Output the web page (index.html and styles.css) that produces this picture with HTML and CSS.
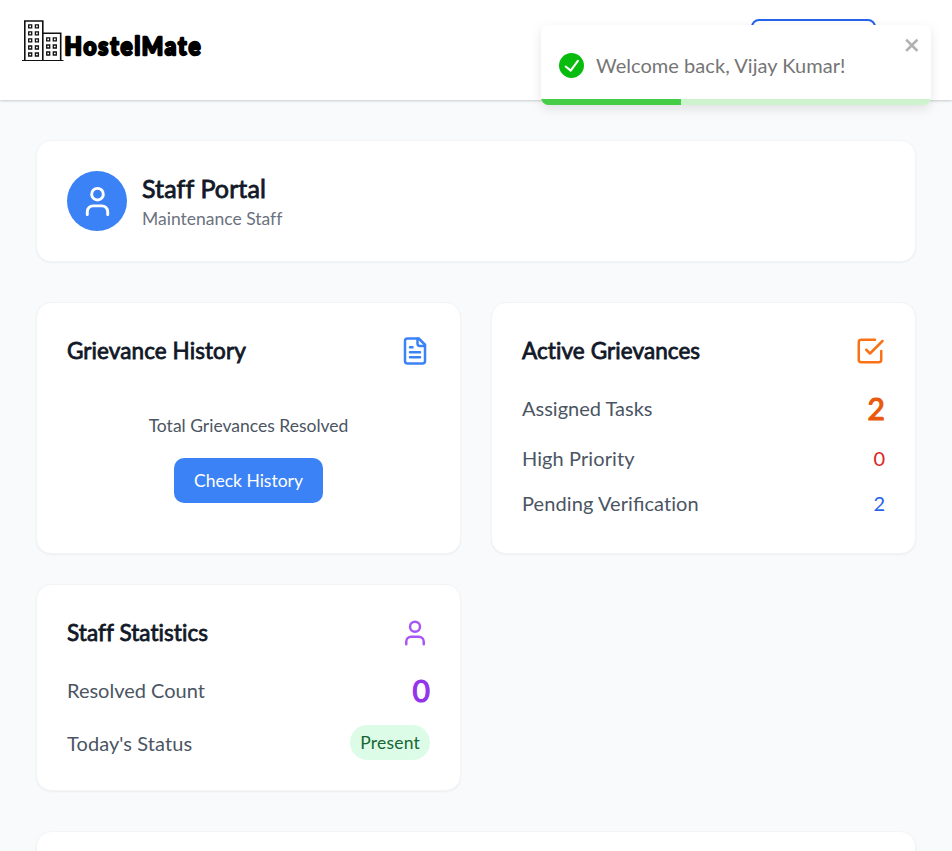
FILE: index.html
```html
<!DOCTYPE html>
<html lang="en">
<head>
<meta charset="utf-8">
<title>HostelMate</title>
<link rel="stylesheet" href="styles.css">
</head>
<body>
<header class="topbar">
  <div class="brand">
    <svg class="brand-mark" width="42" height="43" viewBox="0 0 42 43" fill="none" stroke="#111">
      <path d="M0 41.5H41.5" stroke-width="1.2"/>
      <path d="M2.8 41V2H20.8V41M20.8 14.2H38.7V41" stroke-width="1.6"/>
      <g stroke-width="1.3">
        <path d="M6.7 5.9h3v3h-3zM13.4 5.9h3v3h-3zM6.7 12.9h3v3h-3zM13.4 12.9h3v3h-3zM6.7 19.9h3v3h-3zM13.4 19.9h3v3h-3zM6.7 27h3v3h-3zM13.4 27h3v3h-3zM6.7 34h3v3h-3zM13.4 34h3v3h-3z"/>
        <path d="M24.7 18.9h3v3h-3zM31.3 18.9h3v3h-3zM24.7 26h3v3h-3zM31.3 26h3v3h-3zM24.7 33h3v3h-3zM31.3 33h3v3h-3z"/>
      </g>
    </svg>
    <svg class="brand-name" width="142" height="34" viewBox="0 0 142 34"><text transform="scale(.9 1)" x="0.6" y="25.7" textLength="151" lengthAdjust="spacing">HostelMate</text></svg>
  </div>
  <div class="nav-button"></div>
</header>

<main class="page">
  <section class="card profile">
    <div class="avatar">
      <svg class="icon" width="35" height="35" viewBox="0 0 24 24"><path d="M19 21v-2a4 4 0 0 0-4-4H9a4 4 0 0 0-4 4v2"/><circle cx="12" cy="7" r="4"/></svg>
    </div>
    <div>
      <h1 class="profile-title">Staff Portal</h1>
      <p class="small muted">Maintenance Staff</p>
    </div>
  </section>

  <div class="grid">
    <section class="card">
      <div class="card-head">
        <h2>Grievance History</h2>
        <svg class="icon blue" width="30" height="30" viewBox="0 0 24 24"><path d="M15 2H6a2 2 0 0 0-2 2v16a2 2 0 0 0 2 2h12a2 2 0 0 0 2-2V7Z"/><path d="M14 2v4a2 2 0 0 0 2 2h4M10 9H8M16 13H8M16 17H8"/></svg>
      </div>
      <div class="history">
        <p class="small">Total Grievances Resolved</p>
        <button class="button small">Check History</button>
      </div>
    </section>

    <section class="card">
      <div class="card-head">
        <h2>Active Grievances</h2>
        <svg class="icon orange" width="30" height="30" viewBox="0 0 24 24"><path d="m9 11 3 3L22 4"/><path d="M21 12v7a2 2 0 0 1-2 2H5a2 2 0 0 1-2-2V5a2 2 0 0 1 2-2h11"/></svg>
      </div>
      <div class="rows">
        <div class="row"><span>Assigned Tasks</span><span class="big count-orange">2</span></div>
        <div class="row"><span class="spaced">High Priority</span><span class="count-red">0</span></div>
        <div class="row"><span class="spaced">Pending Veri<span class="ligature">fi</span>cation</span><span class="count-blue">2</span></div>
      </div>
    </section>

    <section class="card">
      <div class="card-head">
        <h2>Staff Statistics</h2>
        <svg class="icon purple" width="30" height="30" viewBox="0 0 24 24"><path d="M19 21v-2a4 4 0 0 0-4-4H9a4 4 0 0 0-4 4v2"/><circle cx="12" cy="7" r="4"/></svg>
      </div>
      <div class="rows">
        <div class="row"><span>Resolved Count</span><span class="big count-purple">0</span></div>
        <div class="row"><span class="spaced">Today's Status</span><span class="pill small">Present</span></div>
      </div>
    </section>
  </div>

  <section class="card next"></section>
</main>

<div class="toast">
  <svg class="toast-icon" width="25" height="25" viewBox="0 0 24 24"><path fill="#07bc0c" d="M12 0a12 12 0 1012 12A12.014 12.014 0 0012 0zm6.927 8.2l-6.845 9.289a1.011 1.011 0 01-1.43.188l-4.888-3.908a1 1 0 111.25-1.562l4.076 3.261 6.227-8.451a1 1 0 111.61 1.183z"/></svg>
  <span class="toast-text">Welcome back, Vijay Kumar!</span>
  <svg class="toast-close" viewBox="0 0 14 16" width="17.5" height="20"><path fill="#000" fill-rule="evenodd" d="M7.71 8.23l3.75 3.75-1.48 1.48-3.75-3.75-3.75 3.75L1 11.98l3.75-3.75L1 4.48 2.48 3l3.75 3.75L9.98 3l1.48 1.48-3.75 3.75z"/></svg>
  <div class="toast-track"><div class="toast-fill"></div></div>
</div>
</body>
</html>
```
FILE: styles.css
```css
* { box-sizing: border-box; }
html { overflow: hidden; }
body {
  margin: 0;
  height: 851px;
  overflow: hidden;
  background: #f9fafb;
  color: #4b5563;
  font: 20px/30px Lato, "Liberation Sans", sans-serif;
  font-variant-ligatures: none;
}
h1, h2, p { margin: 0; }

.topbar {
  display: flex;
  justify-content: space-between;
  align-items: flex-start;
  height: 100px;
  padding: 19px 76px 0 22px;
  background: #fff;
  box-shadow: 0 1px 3px rgba(0, 0, 0, .1), 0 1px 2px rgba(0, 0, 0, .1);
}
.brand { display: flex; align-items: flex-start; }
.brand-name { margin-top: 10px; }
.brand-name text {
  font: 900 25px Lato, sans-serif;
  fill: #000;
  stroke: #000;
  stroke-width: 2.3px;
  stroke-linejoin: round;
}
.nav-button {
  width: 125px;
  height: 45px;
  border: 2px solid #2563eb;
  border-radius: 8px;
}

.page { height: 751px; overflow: hidden; padding: 40px 36px 0; }
.card {
  padding: 30px;
  background: #fff;
  border: 1px solid #f3f4f6;
  border-radius: 15px;
  box-shadow: 0 1px 2px rgba(0, 0, 0, .05);
}
.profile { display: flex; align-items: center; gap: 15px; height: 122px; margin-bottom: 40px; }
.avatar {
  display: grid;
  place-items: center;
  width: 60px;
  height: 60px;
  border-radius: 50%;
  background: #3b82f6;
  color: #fff;
}
h1, h2 { font-weight: 400; color: #111827; -webkit-text-stroke: .8px #111827; }
h2 { font-size: 22.5px; line-height: 35px; letter-spacing: .08px; }
.profile-title { font-size: 25px; line-height: 35px; letter-spacing: .12px; }
.small { font-size: 17.5px; line-height: 25px; }
.muted { color: #6b7280; }
.spaced { letter-spacing: .09px; }
.ligature { letter-spacing: 0; font-variant-ligatures: common-ligatures; }

.grid { display: grid; grid-template-columns: 1fr 1fr; gap: 30px; margin-bottom: 40px; }
.card-head { display: flex; justify-content: space-between; align-items: center; margin-bottom: 20px; }
.icon { fill: none; stroke: currentColor; stroke-width: 2; stroke-linecap: round; stroke-linejoin: round; }
.blue { color: #3b82f6; }
.orange { color: #f97316; }
.purple { color: #a855f7; }

.history { display: flex; flex-direction: column; align-items: center; gap: 20px; padding: 25px 0 20px; }
.button {
  padding: 10px 20px;
  border: 0;
  border-radius: 10px;
  background: #3b82f6;
  color: #fff;
  font-family: inherit;
}
.rows { display: flex; flex-direction: column; gap: 15px; }
.row { display: flex; justify-content: space-between; align-items: center; }
.big { font-size: 30px; line-height: 40px; -webkit-text-stroke: 1.2px currentColor; }
.count-orange { color: #ea580c; }
.count-red { color: #dc2626; }
.count-blue { color: #2563eb; }
.count-purple { color: #9333ea; }
.pill { padding: 5px 10px; border-radius: 99px; background: #dcfce7; color: #166534; letter-spacing: .22px; }
.next { height: 122px; }

.toast {
  position: absolute;
  top: 25px;
  left: 541px;
  display: flex;
  align-items: center;
  gap: 12px;
  width: 390px;
  height: 80px;
  padding: 0 18px;
  border-radius: 7.5px;
  overflow: hidden;
  background: #fff;
  color: #757575;
  box-shadow: 0 4px 12px rgba(0, 0, 0, .1);
}
.toast-text { letter-spacing: .05px; }
.toast-close { position: absolute; top: 10px; right: 10px; opacity: .3; }
.toast-track { position: absolute; left: 0; right: 0; bottom: 0; height: 6px; background: #cdf2ce; }
.toast-fill { width: 140px; height: 6px; background: #45cd48; }
```
